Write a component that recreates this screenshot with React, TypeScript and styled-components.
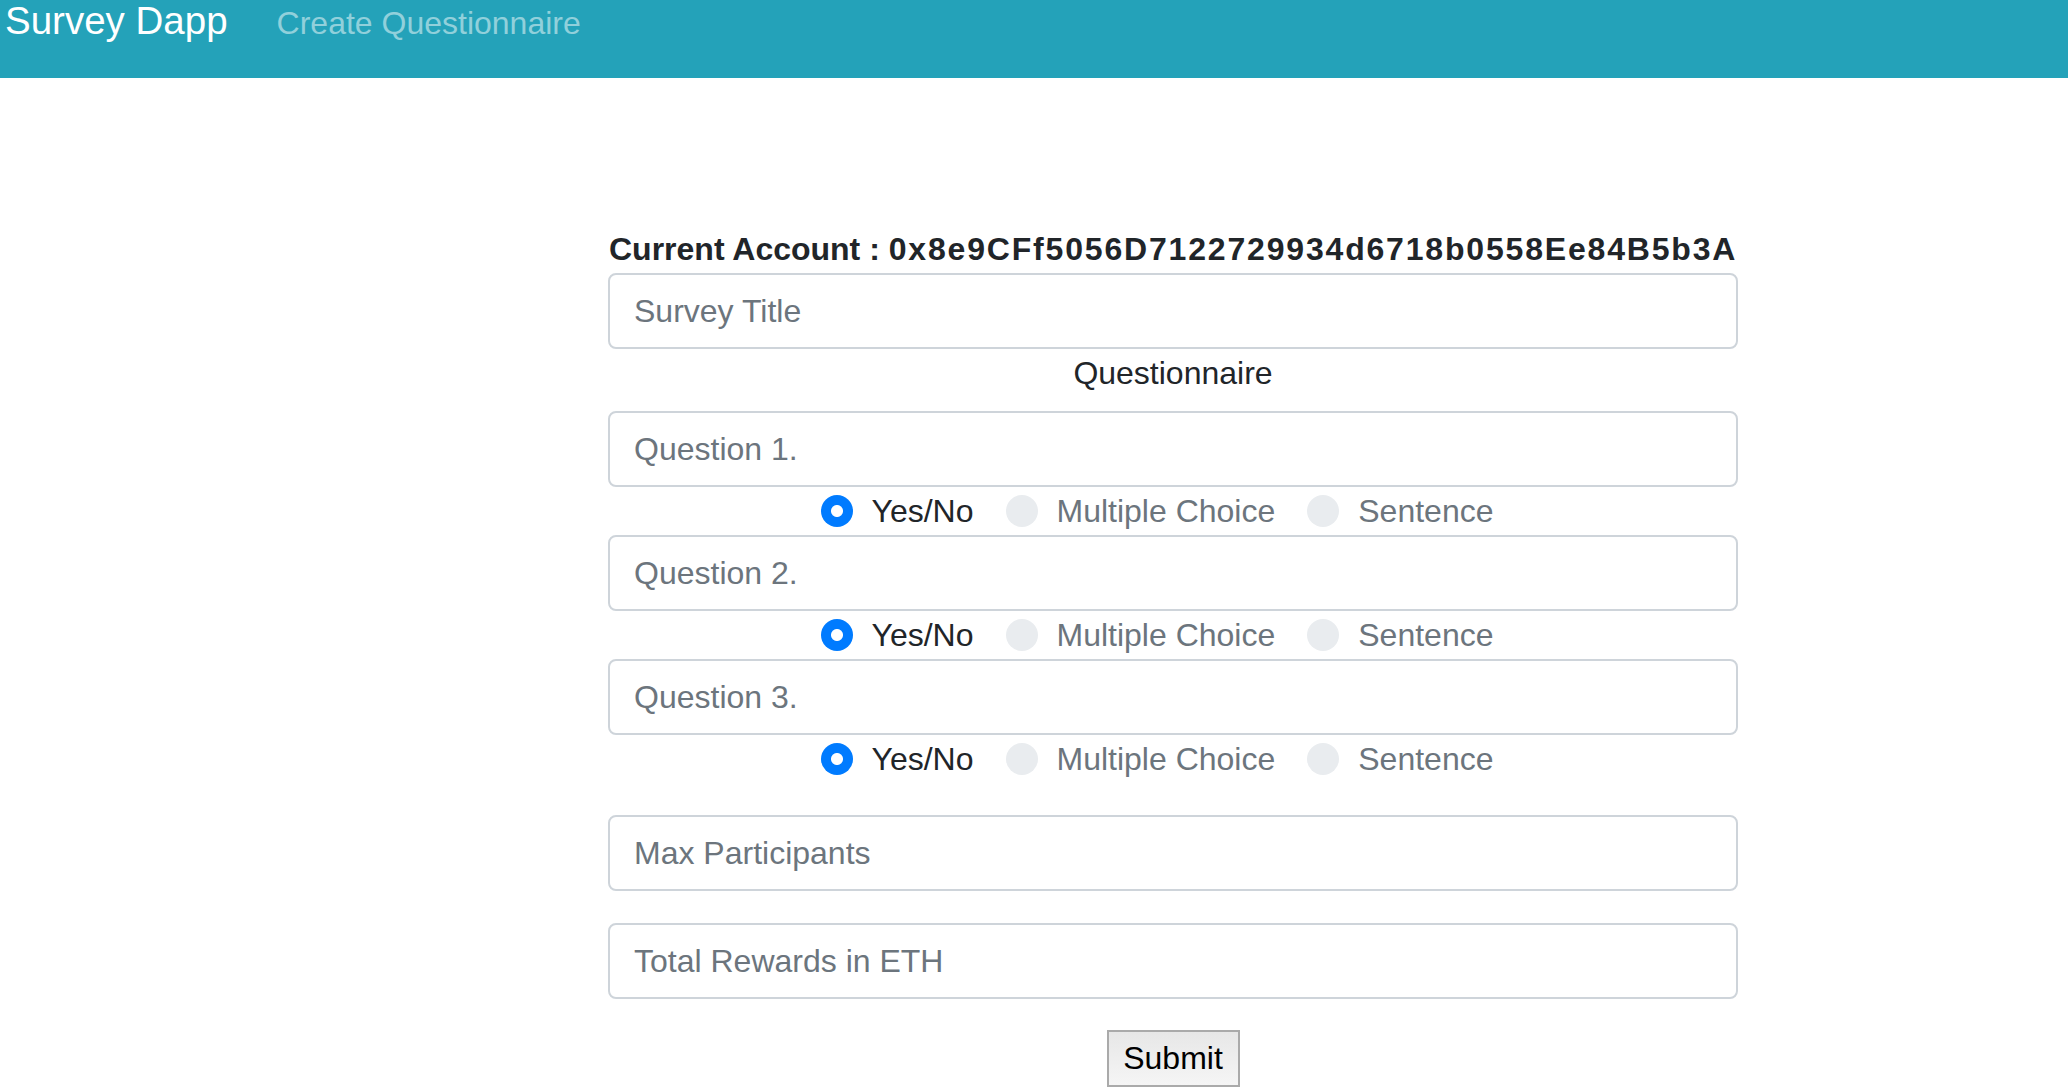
import React from 'react';
import styled, { createGlobalStyle } from 'styled-components';

const colors = {
  NAV: '#24a2b9',
  NAV_LINK: '#91d0db',
  TEXT: '#212529',
  MUTED: '#6c757d',
  BORDER: '#ced4da',
  PRIMARY: '#007bff',
  RADIO_OFF: '#e9ecef',
};

const GlobalStyle = createGlobalStyle`
  html, body {
    margin: 0;
    padding: 0;
    background: #fff;
    font-family: 'Liberation Sans', Arial, sans-serif;
    color: ${colors.TEXT};
  }
  * {
    box-sizing: border-box;
  }
`;

const questions = [1, 2, 3];
const kinds = ['Yes/No', 'Multiple Choice', 'Sentence'];

export default function App() {
  return (
    <>
      <GlobalStyle />
      <NavBar>
        <Brand>Survey Dapp</Brand>
        <NavLink href='#'>Create Questionnaire</NavLink>
      </NavBar>
      <Main>
        <Account>
          Current Account : <Address>0x8e9CFf5056D7122729934d6718b0558Ee84B5b3A</Address>
        </Account>
        <TextInput $mt={5} placeholder='Survey Title' />
        <SectionLabel>Questionnaire</SectionLabel>
        {questions.map((n, i) => (
          <React.Fragment key={n}>
            <TextInput $mt={i === 0 ? 14 : 0} placeholder={`Question ${n}.`} />
            <RadioRow>
              {kinds.map((k, j) => (
                <RadioOption key={k} $active={j === 0}>
                  <Radio type='radio' name={`q${n}`} defaultChecked={j === 0} />
                  {k}
                </RadioOption>
              ))}
            </RadioRow>
          </React.Fragment>
        ))}
        <TextInput $mt={32} placeholder='Max Participants' />
        <TextInput $mt={32} placeholder='Total Rewards in ETH' />
        <ButtonRow>
          <SubmitButton type='button'>Submit</SubmitButton>
        </ButtonRow>
      </Main>
    </>
  );
}

const NavBar = styled.nav`
  display: flex;
  align-items: baseline;
  height: 78px;
  padding-left: 5px;
  background: ${colors.NAV};
`;

const Brand = styled.span`
  font-size: 38.5px;
  line-height: 42px;
  color: #fff;
  margin-right: 49px;
`;

const NavLink = styled.a`
  font-size: 32px;
  line-height: 38px;
  color: ${colors.NAV_LINK};
  text-decoration: none;
`;

const Main = styled.main`
  display: flex;
  flex-direction: column;
  width: 1130px;
  margin-left: 608px;
  padding-top: 152px;
`;

const Account = styled.h5`
  margin: 0;
  font-size: 32px;
  line-height: 38px;
  font-weight: 700;
  white-space: nowrap;
  padding-left: 1px;
`;

const Address = styled.span`
  letter-spacing: 1.82px;
`;

const TextInput = styled.input<{ $mt?: number }>`
  display: block;
  width: 100%;
  height: 76px;
  margin-top: ${(p) => p.$mt ?? 0}px;
  padding: 0 24px;
  border: 2px solid ${colors.BORDER};
  border-radius: 8px;
  font-family: inherit;
  font-size: 32px;
  color: ${colors.TEXT};
  background: #fff;
  outline: none;

  &::placeholder {
    color: ${colors.MUTED};
  }
`;

const SectionLabel = styled.div`
  font-size: 32px;
  line-height: 48px;
  text-align: center;
`;

const RadioRow = styled.div`
  display: flex;
  justify-content: center;
  height: 48px;
  align-items: center;
`;

const RadioOption = styled.label<{ $active: boolean }>`
  display: inline-flex;
  align-items: center;
  gap: 19px;
  margin-right: 32px;
  font-size: 32px;
  line-height: 48px;
  color: ${(p) => (p.$active ? colors.TEXT : colors.MUTED)};
`;

const Radio = styled.input`
  appearance: none;
  -webkit-appearance: none;
  width: 32px;
  height: 32px;
  margin: 0;
  border-radius: 50%;
  background: ${colors.RADIO_OFF};
  flex-shrink: 0;

  &:checked {
    background: radial-gradient(circle, #fff 0 5.5px, ${colors.PRIMARY} 6.5px);
  }
`;

const ButtonRow = styled.div`
  display: flex;
  justify-content: center;
  margin-top: 31px;
`;

const SubmitButton = styled.button`
  width: 133px;
  height: 57px;
  padding: 0;
  border: 2px solid #aaaaaa;
  border-radius: 0;
  background: linear-gradient(#e7e7e7, #f5f5f5);
  font-family: inherit;
  font-size: 32px;
  color: #000;
`;
